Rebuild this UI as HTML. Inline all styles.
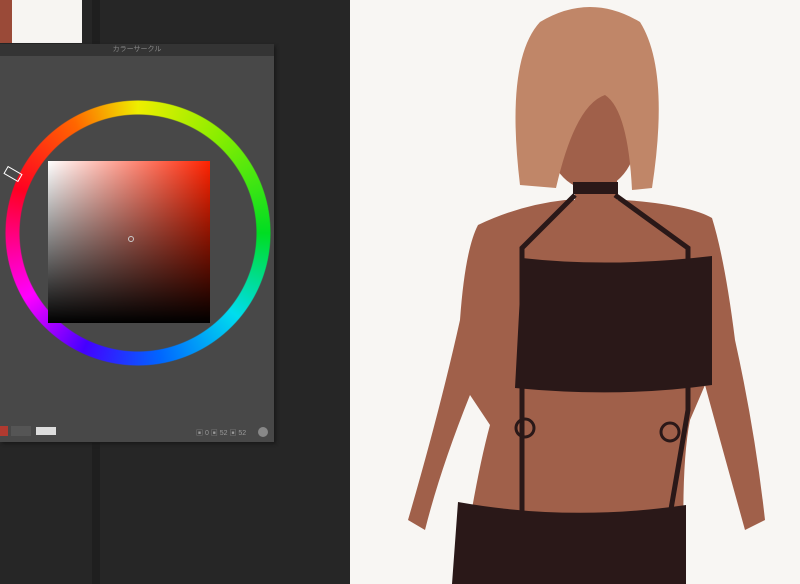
<!DOCTYPE html>
<html><head><style>
body{margin:0;width:800px;height:584px;overflow:hidden;background:#262626;position:relative;font-family:"Liberation Sans","Noto Sans CJK JP",sans-serif}
div{position:absolute}
</style></head><body>
<div style="left:0;top:0;width:82px;height:43px;background:#f7f5f2"></div>
<div style="left:0;top:0;width:12px;height:43px;background:#9a4a38"></div>
<div style="left:92px;top:0;width:8px;height:584px;background:#1f1f1f"></div>
<div style="left:0;top:44px;width:274px;height:398px;background:#484848;box-shadow:2px 2px 3px #1a1a1a"></div>
<div style="left:0;top:44px;width:274px;height:12px;background:#343434;color:#888;font-size:7px;line-height:12px;text-align:center">カラーサークル</div>
<div style="left:5px;top:100px;width:266px;height:266px;border-radius:50%;background:conic-gradient(#ee0 0deg,#8e0 40deg,#0d2 90deg,#0de 130deg,#06f 170deg,#40f 205deg,#f0f 240deg,#f02 290deg,#f60 330deg,#ee0 360deg);-webkit-mask:radial-gradient(circle,transparent 118px,#000 119px,#000 132px,transparent 133px);mask:radial-gradient(circle,transparent 118px,#000 119px,#000 132px,transparent 133px)"></div>
<div style="left:48px;top:161px;width:162px;height:162px;background:linear-gradient(to bottom,transparent,#000),linear-gradient(to right,#fff,#f20)"></div>
<div style="left:0;top:426px;width:8px;height:10px;background:#b03a30"></div>
<div style="left:11px;top:426px;width:20px;height:10px;background:#555"></div>
<div style="left:36px;top:427px;width:20px;height:8px;background:#ddd"></div>
<div style="left:196px;top:428px;color:#999;font-size:7px">▣ 0 ▣ 52 ▣ 52</div>
<div style="left:258px;top:427px;width:10px;height:10px;border-radius:50%;background:#888"></div>
<svg style="position:absolute;left:0;top:0" width="800" height="584">
<circle cx="131" cy="239" r="2.5" fill="none" stroke="#ccc"/>
<rect x="5" y="170" width="16" height="8" fill="none" stroke="#fff" transform="rotate(30 13 174)"/>
<rect x="350" y="0" width="450" height="584" fill="#f8f6f3"/>
<g fill="#a0604a">
<path d="M478 225 Q520 205 565 200 L625 200 Q690 205 712 218 Q725 260 735 340 Q755 430 765 520 L745 530 Q720 440 705 385 L690 420 Q680 470 685 584 L460 584 Q475 480 490 425 L470 395 Q440 470 425 530 L408 520 Q440 410 460 320 Q465 250 478 225Z"/>
<rect x="575" y="165" width="42" height="50"/>
<ellipse cx="592" cy="135" rx="45" ry="55"/>
</g>
<path d="M520 185 Q505 60 540 22 Q590 -8 640 22 Q670 70 652 188 L632 190 Q628 110 605 95 Q575 105 556 188Z" fill="#c08668"/>
<path d="M522 258 Q610 268 712 256 L712 385 Q620 398 515 388Z" fill="#2a1818"/>
<path d="M458 502 Q570 522 686 505 L686 584 L452 584Z" fill="#2a1818"/>
<rect x="573" y="182" width="45" height="12" fill="#2a1818"/>
<g stroke="#2a1818" stroke-width="5" fill="none"><path d="M575 195 L522 248 L522 520"/><path d="M615 195 L688 248 L688 410 L670 515"/></g>
<g stroke="#2a1818" stroke-width="3" fill="none"><circle cx="525" cy="428" r="9"/><circle cx="670" cy="432" r="9"/></g>
</svg>
</body></html>
